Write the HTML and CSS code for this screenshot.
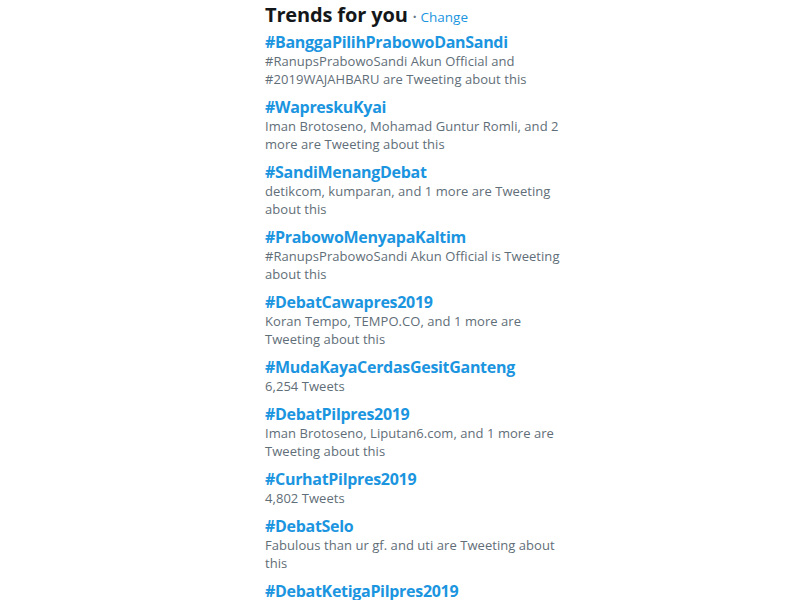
FILE: index.html
```html
<!DOCTYPE html>
<html>
<head>
<meta charset="utf-8">
<link rel="stylesheet" href="styles.css">
</head>
<body>
<div class="trends">
  <div class="header"><h3 class="title">Trends for you</h3><span class="dot">·</span><a class="change">Change</a></div>
  <ul class="list">
    <li class="item"><div class="tag">#BanggaPilihPrabowoDanSandi</div><div class="desc">#RanupsPrabowoSandi Akun Official and #2019WAJAHBARU are Tweeting about this</div></li>
    <li class="item"><div class="tag">#WapreskuKyai</div><div class="desc">Iman Brotoseno, Mohamad Guntur Romli, and 2 more are Tweeting about this</div></li>
    <li class="item"><div class="tag">#SandiMenangDebat</div><div class="desc">detikcom, kumparan, and 1 more are Tweeting about this</div></li>
    <li class="item"><div class="tag">#PrabowoMenyapaKaltim</div><div class="desc">#RanupsPrabowoSandi Akun Official is Tweeting about this</div></li>
    <li class="item"><div class="tag">#DebatCawapres2019</div><div class="desc">Koran Tempo, TEMPO.CO, and 1 more are Tweeting about this</div></li>
    <li class="item"><div class="tag">#MudaKayaCerdasGesitGanteng</div><div class="desc">6,254 Tweets</div></li>
    <li class="item"><div class="tag">#DebatPilpres2019</div><div class="desc">Iman Brotoseno, Liputan6.com, and 1 more are Tweeting about this</div></li>
    <li class="item"><div class="tag">#CurhatPilpres2019</div><div class="desc">4,802 Tweets</div></li>
    <li class="item"><div class="tag">#DebatSelo</div><div class="desc">Fabulous than ur gf. and uti are Tweeting about this</div></li>
    <li class="item"><div class="tag">#DebatKetigaPilpres2019</div></li>
  </ul>
</div>
</body>
</html>
```
FILE: styles.css
```css
html, body {
  margin: 0;
  padding: 0;
  background: #ffffff;
}
body {
  font-family: "Open Sans", "Noto Sans", sans-serif;
  overflow: hidden;
  height: 600px;
}
.trends {
  width: 302px;
  margin-left: 265px;
  padding-top: 1px;
}
.header {
  display: flex;
  align-items: baseline;
  height: 27px;
}
.title {
  margin: 0;
  font-size: 20px;
  font-weight: 700;
  color: #14171a;
  letter-spacing: -0.15px;
}
.dot {
  color: #657786;
  font-size: 13.5px;
  margin: 0 4px 0 5px;
  font-weight: 700;
}
.change {
  color: #1b95e0;
  font-size: 13.5px;
}
.list {
  list-style: none;
  margin: 0;
  padding: 0;
  display: flex;
  flex-direction: column;
  gap: 10px;
  padding-top: 4.6px;
}
.tag {
  color: #1b95e0;
  font-weight: 700;
  font-size: 16px;
  line-height: 19px;
  letter-spacing: -0.3px;
}
.desc {
  color: #5f6e78;
  font-size: 13px;
  line-height: 18px;
  letter-spacing: 0.05px;
}
```
